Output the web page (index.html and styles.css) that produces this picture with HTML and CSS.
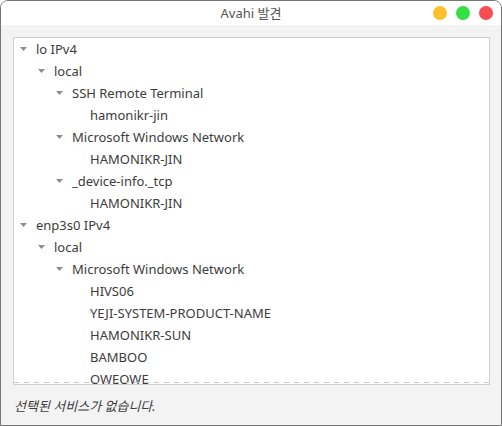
FILE: index.html
```html
<!DOCTYPE html>
<html lang="ko">
<head>
<meta charset="utf-8">
<title>Avahi 발견</title>
<link rel="stylesheet" href="styles.css">
</head>
<body>
<div class="window">
  <div class="titlebar">
    <div class="title">Avahi 발견</div>
    <div class="controls">
      <span class="dot dot-min"></span>
      <span class="dot dot-max"></span>
      <span class="dot dot-close"></span>
    </div>
  </div>
  <div class="content">
    <div class="tree">
      <div class="rows">
        <div class="row l0"><span class="exp"><svg width="7" height="4" viewBox="0 0 7 4"><polygon points="0,0 7,0 3.5,4"/></svg></span><span class="label">lo IPv4</span></div>
        <div class="row l1"><span class="exp"><svg width="7" height="4" viewBox="0 0 7 4"><polygon points="0,0 7,0 3.5,4"/></svg></span><span class="label">local</span></div>
        <div class="row l2"><span class="exp"><svg width="7" height="4" viewBox="0 0 7 4"><polygon points="0,0 7,0 3.5,4"/></svg></span><span class="label">SSH Remote Terminal</span></div>
        <div class="row l3"><span class="exp"></span><span class="label">hamonikr-jin</span></div>
        <div class="row l2"><span class="exp"><svg width="7" height="4" viewBox="0 0 7 4"><polygon points="0,0 7,0 3.5,4"/></svg></span><span class="label">Microsoft Windows Network</span></div>
        <div class="row l3"><span class="exp"></span><span class="label">HAMONIKR-JIN</span></div>
        <div class="row l2"><span class="exp"><svg width="7" height="4" viewBox="0 0 7 4"><polygon points="0,0 7,0 3.5,4"/></svg></span><span class="label">_device-info._tcp</span></div>
        <div class="row l3"><span class="exp"></span><span class="label">HAMONIKR-JIN</span></div>
        <div class="row l0"><span class="exp"><svg width="7" height="4" viewBox="0 0 7 4"><polygon points="0,0 7,0 3.5,4"/></svg></span><span class="label">enp3s0 IPv4</span></div>
        <div class="row l1"><span class="exp"><svg width="7" height="4" viewBox="0 0 7 4"><polygon points="0,0 7,0 3.5,4"/></svg></span><span class="label">local</span></div>
        <div class="row l2"><span class="exp"><svg width="7" height="4" viewBox="0 0 7 4"><polygon points="0,0 7,0 3.5,4"/></svg></span><span class="label">Microsoft Windows Network</span></div>
        <div class="row l3"><span class="exp"></span><span class="label">HIVS06</span></div>
        <div class="row l3"><span class="exp"></span><span class="label">YEJI-SYSTEM-PRODUCT-NAME</span></div>
        <div class="row l3"><span class="exp"></span><span class="label">HAMONIKR-SUN</span></div>
        <div class="row l3"><span class="exp"></span><span class="label">BAMBOO</span></div>
        <div class="row l3"><span class="exp"></span><span class="label">QWEQWE</span></div>
        <div class="row l3"><span class="exp"></span><span class="label">HAMONIKR-NOTE</span></div>
      </div>
      <div class="undershoot"></div>
    </div>
    <div class="status">선택된 서비스가 없습니다.</div>
  </div>
</div>
</body>
</html>
```

FILE: styles.css
```css
html, body {
  margin: 0;
  padding: 0;
  background: #ffffff;
}
body {
  font-family: "Noto Sans", "Noto Sans CJK KR", sans-serif;
  font-size: 13px;
  color: #3c3c3c;
}
.window {
  width: 502px;
  height: 426px;
  box-sizing: border-box;
  border: 1px solid #767676;
  border-radius: 8px 8px 0 0;
  overflow: hidden;
  display: flex;
  flex-direction: column;
  background: #f3f3f3;
}
.titlebar {
  height: 24px;
  flex: none;
  background: #ffffff;
  position: relative;
  display: flex;
  align-items: center;
  justify-content: center;
}
.title {
  color: #555555;
  font-size: 13px;
  line-height: 24px;
}
.controls {
  position: absolute;
  right: 8px;
  top: 5px;
  display: flex;
  gap: 9px;
}
.dot {
  width: 14px;
  height: 14px;
  border-radius: 50%;
  display: block;
}
.dot-min { background: #fbc02d; }
.dot-max { background: #32e043; }
.dot-close { background: #f44d54; }
.content {
  flex: 1;
  display: flex;
  flex-direction: column;
  padding: 12px 11px 0 12px;
}
.tree {
  height: 346px;
  flex: none;
  border: 1px solid #d0d0d0;
  background: #ffffff;
  overflow: hidden;
  position: relative;
}
.row {
  height: 22px;
  display: flex;
  align-items: center;
  white-space: nowrap;
}
.l1 { padding-left: 18px; }
.l2 { padding-left: 36px; }
.l3 { padding-left: 54px; }
.exp {
  width: 22px;
  flex: none;
  display: flex;
  align-items: center;
  padding-left: 6px;
  box-sizing: border-box;
}
.exp svg {
  display: block;
  fill: #8c8c8c;
}
.label {
  line-height: 22px;
}
.undershoot {
  position: absolute;
  left: 0;
  right: 0;
  bottom: 1px;
  height: 1px;
  background-image: linear-gradient(to right, #c8c8c8 50%, transparent 50%);
  background-size: 10px 1px;
}
.status {
  flex: 1;
  display: flex;
  align-items: center;
  font-style: italic;
  color: #3c3c3c;
  padding-left: 1px;
}
```
